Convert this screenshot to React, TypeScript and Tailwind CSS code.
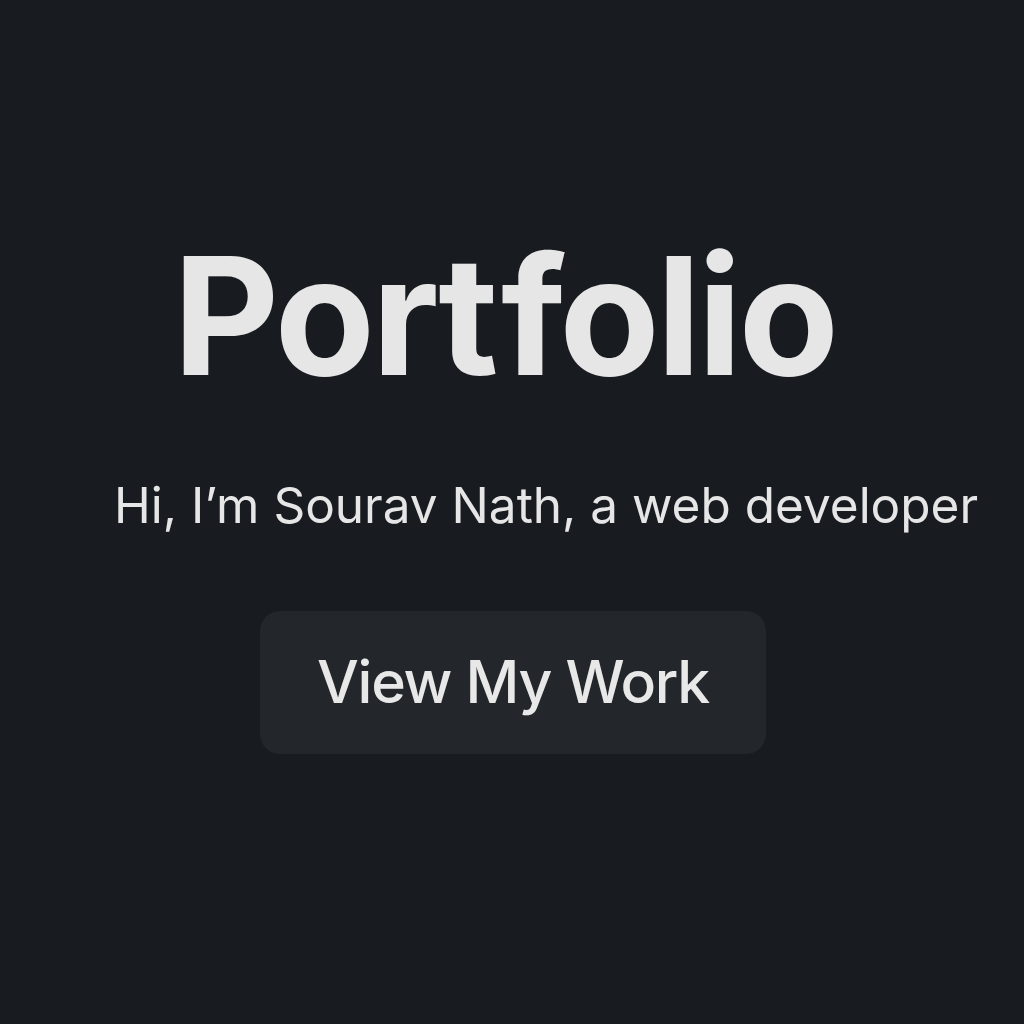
export default function App() {
    return (
        <div
            className="w-[1024px] h-[1024px] bg-[#181b20] flex flex-col items-start text-[#e6e6e6]"
            style={{ fontFamily: "Inter, 'Noto Sans', sans-serif" }}
        >
            {/* gap between t and f so the crossbars don't merge */}
            <h1 className="ml-[173px] mt-[216px] text-[164px] leading-[200px] font-bold tracking-[-3.4px] [font-variant-ligatures:none]">
                Port<span className="ml-[6px]">folio</span>
            </h1>

            <p className="ml-[114px] mt-[59px] text-[49.5px] leading-[60px] font-normal">
                Hi, I’m Sourav Nath, a web developer
            </p>

            <button className="ml-[260px] mt-[76px] w-[506px] h-[143px] rounded-[20px] bg-[#23262b] text-[59px] font-medium tracking-[-1.3px] text-[#e8e8e8]">
                View My Work
            </button>
        </div>
    );
}
